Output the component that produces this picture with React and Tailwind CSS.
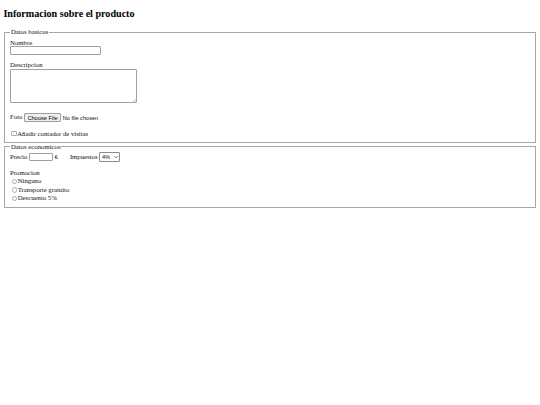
import { useState } from "react";

const serif = "font-['Liberation_Serif','Times_New_Roman',serif]";
const sans = "font-['Liberation_Sans',Arial,sans-serif]";

function Chevron() {
  return (
    <svg
      viewBox="0 0 10 6"
      className="absolute right-[2px] top-1/2 -translate-y-1/2 w-[4px] h-[2.6px] pointer-events-none"
    >
      <path d="M1 1 L5 5 L9 1" fill="none" stroke="#222" strokeWidth="1.6" />
    </svg>
  );
}

// tiny resize grip in the textarea corner
function Grip() {
  return (
    <svg viewBox="0 0 6 6" className="absolute right-[1px] bottom-[1px] w-[3px] h-[3px] pointer-events-none">
      <path d="M6 0 L0 6 M6 3 L3 6" stroke="#8a8a8a" strokeWidth="0.9" />
    </svg>
  );
}

function RadioOption({ value, label, name, checked, onChange }) {
  return (
    <label className="flex items-center h-[8.5px] leading-[8.5px]">
      <input
        type="radio"
        name={name}
        value={value}
        checked={checked}
        onChange={onChange}
        className="appearance-none shrink-0 w-[5.5px] h-[5.5px] ml-[1.5px] mr-[0.6px] rounded-full border border-[#ababab] bg-white checked:border-[#1a73e8] checked:bg-[#1a73e8]"
      />
      <span>{label}</span>
    </label>
  );
}

export default function App() {
  const [promo, setPromo] = useState("");
  const [tax, setTax] = useState("4");

  return (
    <div className={`px-[3.4px] pb-[3.4px] text-[6.75px] leading-[7.8px] text-[#111] bg-white ${serif}`}>
      <h2 className="mt-[8.4px] mb-[8.4px] text-[10.1px] leading-[11.6px] font-bold text-black">
        Informacion sobre el producto
      </h2>

      {/* Datos basicos */}
      <fieldset className="mx-[0.8px] border border-[#a6a6a6] px-[4.9px] pt-[2.4px] pb-[4px]">
        <legend className="px-[0.8px] leading-[7.8px]">Datos basicos</legend>

        <label className="block h-[7.8px]">Nombre</label>
        <input
          type="text"
          className={`block w-[91px] h-[9px] bg-white border border-[#a0a0a0] rounded-[1px] px-[1px] text-[5.6px] ${sans}`}
        />

        <label className="block mt-[5.8px] h-[7.8px]">Descripcion</label>
        <div className="relative w-[127px] h-[34px]">
          <textarea
            className={`block w-full h-full resize-none bg-white border border-[#a0a0a0] rounded-[1px] px-[1px] text-[5.6px] ${sans}`}
          />
          <Grip />
        </div>

        <div className="flex items-center mt-[9.6px] h-[9.4px]">
          <span>Foto</span>
          <input
            type="file"
            className={`ml-[1.7px] h-[9px] text-[5.6px] leading-[9px] ${sans} file:h-[9px] file:mr-[1.7px] file:px-[2.5px] file:border file:border-[#a0a0a0] file:rounded-[1px] file:bg-[#efefef] file:text-black`}
          />
        </div>

        <label className="flex items-center mt-[8px] h-[7.6px]">
          <input
            type="checkbox"
            className="appearance-none shrink-0 w-[5.5px] h-[5.5px] ml-[1px] mr-[0.6px] rounded-[1px] border border-[#ababab] bg-white checked:bg-[#1a73e8] checked:border-[#1a73e8]"
          />
          <span>Añadir contador de visitas</span>
        </label>
      </fieldset>

      {/* Datos economicos */}
      <fieldset className="mx-[0.8px] border border-[#a6a6a6] px-[4.9px] pt-[2.4px] pb-[4.2px]">
        <legend className="px-[0.8px] leading-[7.8px]">Datos economicos</legend>

        <div className="flex items-center h-[9px]">
          <span>Precio</span>
          <input
            type="text"
            className={`ml-[1.7px] w-[24px] h-[8.5px] bg-white border border-[#a0a0a0] rounded-[1px] px-[1px] text-[5.6px] ${sans}`}
          />
          <span className="ml-[1.7px]">€</span>
          <span className="ml-[11.8px]">Impuestos</span>
          <div className="relative ml-[1.7px] inline-flex">
            <select
              value={tax}
              onChange={(e) => setTax(e.target.value)}
              className={`appearance-none w-[21px] h-[9.5px] bg-white border border-[#8a8a8a] rounded-[1px] pl-[1.6px] text-[5.6px] leading-[8px] ${sans}`}
            >
              <option value="4">4%</option>
              <option value="10">10%</option>
              <option value="21">21%</option>
            </select>
            <Chevron />
          </div>
        </div>

        <div className="mt-[7.5px] h-[7.8px]">Promocion</div>
        <RadioOption name="promo" value="ninguno" label="Ninguno" checked={promo === "ninguno"} onChange={(e) => setPromo(e.target.value)} />
        <RadioOption name="promo" value="transporte" label="Transporte gratuito" checked={promo === "transporte"} onChange={(e) => setPromo(e.target.value)} />
        <RadioOption name="promo" value="descuento" label="Descuento 5%" checked={promo === "descuento"} onChange={(e) => setPromo(e.target.value)} />
      </fieldset>
    </div>
  );
}
